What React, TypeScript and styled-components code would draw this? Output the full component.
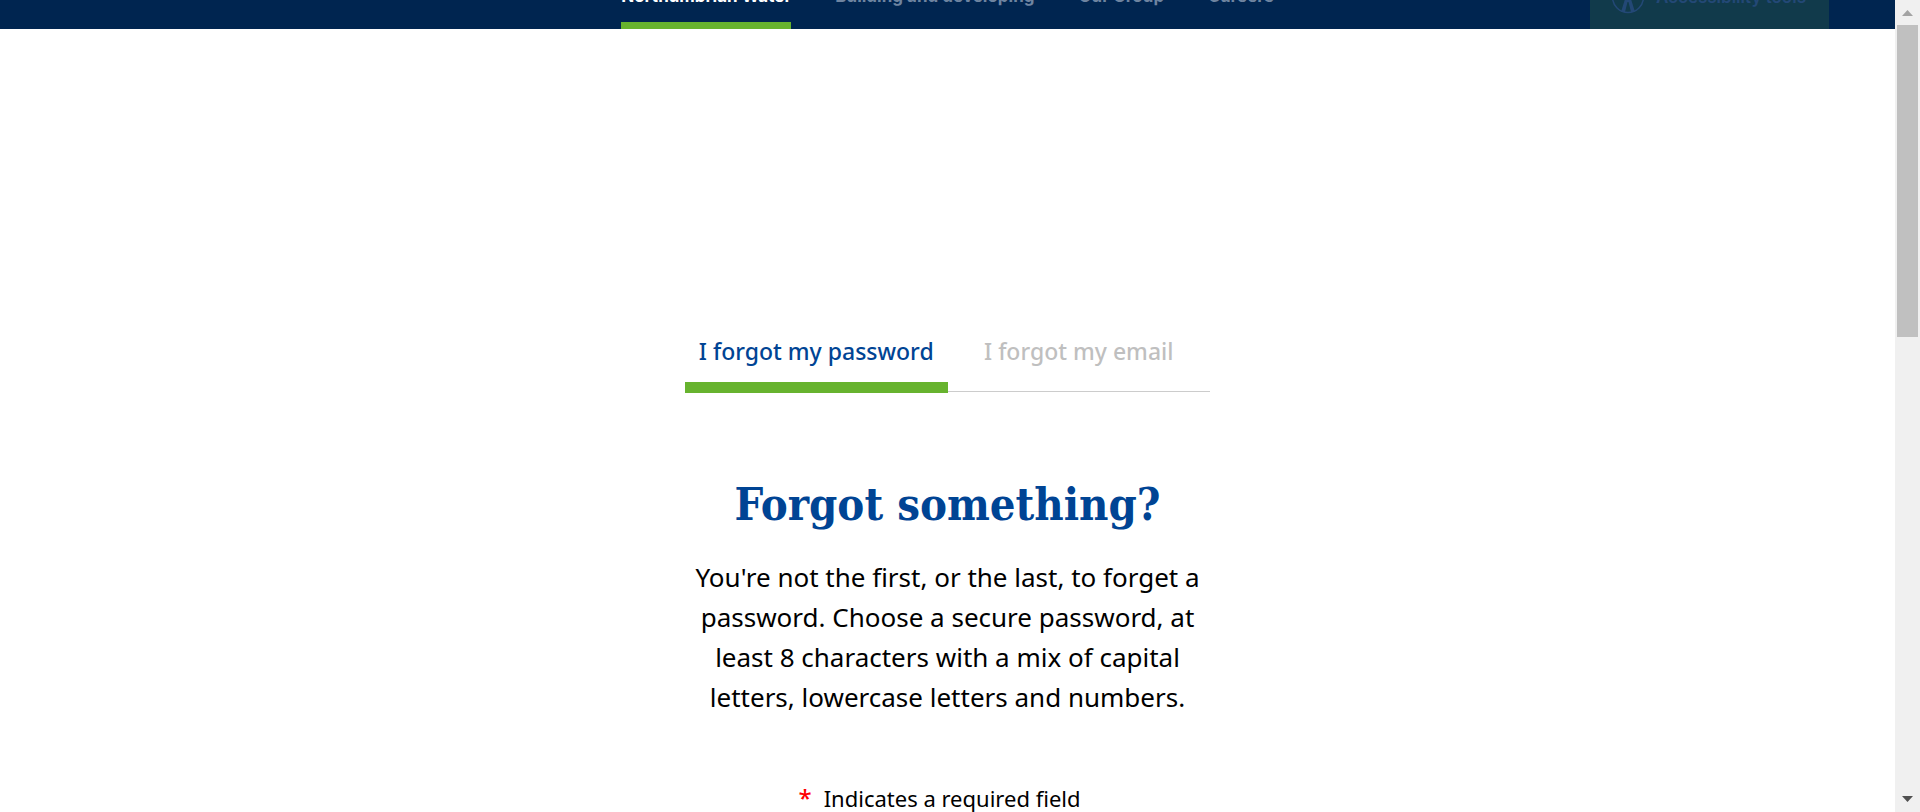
import React, { useState } from "react";
import styled, { createGlobalStyle } from "styled-components";

const GlobalStyle = createGlobalStyle`
  * { box-sizing: border-box; }
  body {
    margin: 0;
    background: #fff;
    color: #000;
    font-family: "Noto Sans", "Open Sans", sans-serif;
    overflow: hidden;
  }
  h1, p { margin: 0; }
`;

const Viewport = styled.div`
  display: flex;
  height: 100vh;
  overflow: hidden;
`;

const Page = styled.div`
  flex: 1;
  min-width: 0;
  overflow: hidden;
`;

/* The bar is scrolled mostly out of view, so its items hang from the bottom edge. */
const Header = styled.header`
  display: grid;
  grid-template-columns: 1fr auto 1fr;
  grid-template-rows: 100%;
  align-items: end;
  height: 29px;
  padding: 0 66px;
  overflow: hidden;
  background: #002550;
  font-family: Inter, sans-serif;
`;

const Nav = styled.nav`
  grid-column: 2;
  display: flex;
  gap: 44px;
`;

const NavLink = styled.a<{ $active?: boolean }>`
  padding-bottom: 14px;
  border-bottom: 7px solid ${(p) => (p.$active ? "#67b32e" : "transparent")};
  color: ${(p) => (p.$active ? "#fff" : "#6e84a0")};
  font-size: 17px;
  font-weight: 700;
  line-height: 24px;
  text-decoration: none;
  white-space: nowrap;
`;

const AccessibilityButton = styled.button`
  justify-self: end;
  display: flex;
  align-items: center;
  gap: 11px;
  height: 64px;
  padding: 0 23px 0 21px;
  border: 0;
  background: #113a4b;
  color: #234876;
  font-family: inherit;
  font-size: 17px;
  font-weight: 600;
  white-space: nowrap;
`;

const Main = styled.main`
  display: flex;
  flex-direction: column;
  align-items: center;
  max-width: 525px;
  margin: 0 auto;
  padding-top: 298px;
  text-align: center;
`;

const Tabs = styled.div`
  display: grid;
  grid-template-columns: 1fr 1fr;
  align-items: start;
  width: 100%;
`;

const Tab = styled.button<{ $active: boolean }>`
  height: ${(p) => (p.$active ? 66 : 65)}px;
  padding: 0 0 ${(p) => (p.$active ? 7 : 16)}px;
  border: 0;
  border-bottom: ${(p) => (p.$active ? "11px solid #67b32e" : "1px solid #ccc")};
  background: none;
  color: ${(p) => (p.$active ? "#004494" : "#bfbfbf")};
  font-family: inherit;
  font-size: 23px;
  font-weight: 500;
  line-height: 48px;
  white-space: nowrap;
`;

const Title = styled.h1`
  margin-top: 80px;
  color: #004494;
  font-family: "DejaVu Serif Condensed", "DejaVu Serif", serif;
  font-size: 45px;
  font-weight: 700;
  line-height: 64px;
`;

const Intro = styled.p`
  margin-top: 20px;
  padding: 0 8px;
  font-size: 26px;
  line-height: 40px;
`;

const RequiredNote = styled.p`
  display: flex;
  align-items: center;
  gap: 12px;
  margin-top: 65px;
  padding-right: 16px;
  font-size: 22px;
  line-height: 32px;
`;

const Asterisk = styled.span`
  color: #f00;
  font-size: 24px;
  font-weight: 500;
`;

const Scrollbar = styled.div`
  display: flex;
  flex-direction: column;
  width: 25px;
  padding: 0 3px 0 2px;
  background: #f0f0f0;
`;

const Arrow = styled.svg`
  flex: none;
  width: 20px;
  height: 25px;
`;

const Track = styled.div`
  flex: 1;
`;

const Thumb = styled.div`
  width: 21px;
  height: 41%;
  background: #c0c0c0;
`;

const navItems = ["Northumbrian Water", "Building and developing", "Our Group", "Careers"];
const tabs = ["I forgot my password", "I forgot my email"];

function PersonIcon() {
  return (
    <svg width="34" height="34" viewBox="0 0 34 34" fill="none" stroke="currentColor" aria-hidden="true">
      <circle cx="17" cy="17" r="15.5" strokeWidth="1.5" />
      <circle cx="17" cy="7" r="3" fill="currentColor" stroke="none" />
      <path d="M7 11l7 2v6l-4 13h4l2.500-10h1L20 32h4l-4-13v-6l7-2-7 .5h-6z" fill="currentColor" stroke="none" />
    </svg>
  );
}

export default function App() {
  const [current, setCurrent] = useState(0);
  return (
    <Viewport>
      <GlobalStyle />
      <Page>
        <Header>
          <Nav>
            {navItems.map((label, i) => (
              <NavLink key={label} href="#" $active={i === 0}>
                {label}
              </NavLink>
            ))}
          </Nav>
          <AccessibilityButton type="button">
            <PersonIcon />
            Accessibility tools
          </AccessibilityButton>
        </Header>
        <Main>
          <Tabs role="tablist">
            {tabs.map((label, i) => (
              <Tab
                key={label}
                type="button"
                role="tab"
                aria-selected={i === current}
                $active={i === current}
                onClick={() => setCurrent(i)}
              >
                {label}
              </Tab>
            ))}
          </Tabs>
          <Title>Forgot something?</Title>
          <Intro>
            You're not the first, or the last, to forget a password. Choose a secure password, at least 8 characters
            with a mix of capital letters, lowercase letters and numbers.
          </Intro>
          <RequiredNote>
            <Asterisk>*</Asterisk>
            Indicates a required field
          </RequiredNote>
        </Main>
      </Page>
      <Scrollbar aria-hidden="true">
        <Arrow viewBox="0 0 20 25">
          <path d="M5 16L10.500 10L16 16z" fill="#a3a3a3" />
        </Arrow>
        <Track>
          <Thumb />
        </Track>
        <Arrow viewBox="0 0 20 25">
          <path d="M5 9L10.500 15L16 9z" fill="#505050" />
        </Arrow>
      </Scrollbar>
    </Viewport>
  );
}
